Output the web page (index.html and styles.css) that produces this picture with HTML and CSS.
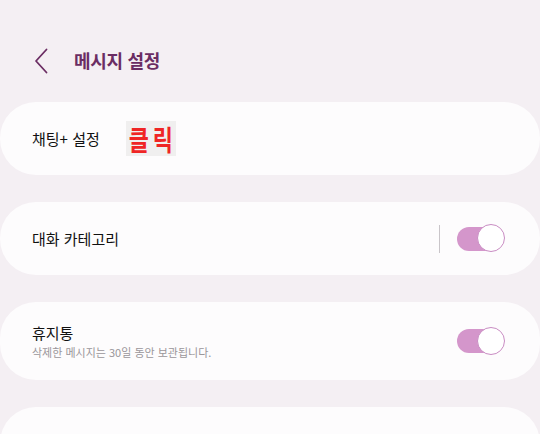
FILE: index.html
```html
<!DOCTYPE html>
<html lang="ko">
<head>
    <meta charset="UTF-8">
    <meta name="viewport" content="width=device-width, initial-scale=1.0">
    <title>메시지 설정</title>
    <link rel="stylesheet" href="styles.css">
</head>
<body>

    <header class="top-bar">
        <svg class="back" width="14" height="26" viewBox="0 0 14 26">
            <path d="M12.5 1.5 L2 13 L12.5 24.5" fill="none" stroke="#6b2d63" stroke-width="1.8" stroke-linecap="round" stroke-linejoin="round"/>
        </svg>
        <h1>메시지 설정</h1>
    </header>

    <main class="list">
        <div class="card">
            <span class="label">채팅+ 설정</span>
            <span class="badge"><span class="badge-text">클릭</span></span>
        </div>

        <div class="card">
            <span class="label grow">대화 카테고리</span>
            <span class="divider"></span>
            <span class="switch on"><span class="thumb"></span></span>
        </div>

        <div class="card tall">
            <div class="grow">
                <div class="label">휴지통</div>
                <div class="sub">삭제한 메시지는 30일 동안 보관됩니다.</div>
            </div>
            <span class="switch on"><span class="thumb"></span></span>
        </div>

        <div class="card"></div>
    </main>

</body>
</html>
```

FILE: styles.css
```css
body {
    margin: 0;
    padding: 0;
    background: #f4eff3;
    font-family: "Noto Sans CJK KR", "Noto Sans", sans-serif;
    color: #111;
}

.top-bar {
    display: flex;
    align-items: center;
    height: 60px;
    padding: 30px 0 0 34px;
    box-sizing: content-box;
}

.back {
    display: block;
    margin-top: 1px;
}

.top-bar h1 {
    margin: 0 0 0 26px;
    font-size: 18px;
    font-weight: bold;
    color: #6b2d63;
    letter-spacing: -0.3px;
}

.list {
    display: flex;
    flex-direction: column;
    gap: 27px;
    padding-top: 12px;
}

.card {
    display: flex;
    align-items: center;
    height: 73px;
    padding: 0 37px 0 32px;
    background: #fdfcfd;
    border-radius: 36px;
}

.card.tall {
    height: 78px;
}

.grow {
    flex: 1;
}

.label {
    font-size: 15px;
    color: #111;
}

.sub {
    margin-top: 1px;
    font-size: 11px;
    color: #9a969a;
}

.badge {
    display: flex;
    align-items: center;
    justify-content: center;
    margin-left: 26px;
    width: 50px;
    height: 35px;
    background: #f0efef;
}

.badge-text {
    display: inline-block;
    color: #ef2525;
    font-size: 28px;
    font-weight: bold;
    letter-spacing: 5px;
    margin-right: -5px;
    transform: scaleX(0.78);
    white-space: nowrap;
}

.divider {
    width: 1px;
    height: 28px;
    background: #c9c5c9;
    margin-right: 17px;
}

.switch {
    position: relative;
    width: 46px;
    height: 24px;
    border-radius: 12px;
    background: #d496cb;
}

.switch .thumb {
    position: absolute;
    right: -2px;
    top: -2.5px;
    width: 26px;
    height: 26px;
    border-radius: 50%;
    background: #fff;
    border: 1.5px solid #c98cc3;
}
```
